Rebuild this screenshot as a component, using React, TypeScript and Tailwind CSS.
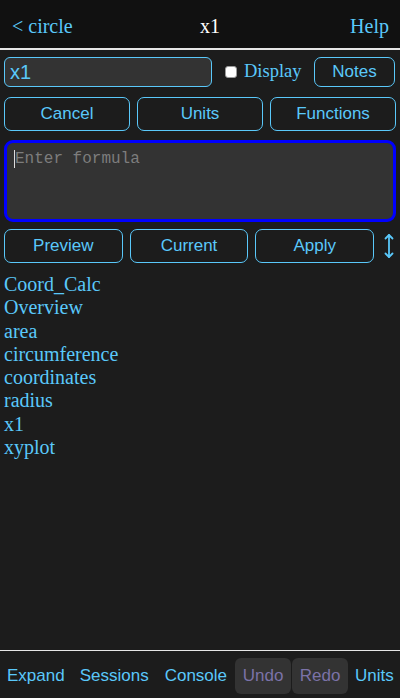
import React from "react";

const sans = { fontFamily: '"Liberation Sans", Arial, sans-serif' };
const serif = { fontFamily: '"Liberation Serif", "Times New Roman", serif' };
const mono = { fontFamily: '"Liberation Mono", "Courier New", monospace' };

function Btn({ label, className = "" }: { label: string; className?: string }) {
  return (
    <button
      className={`border border-[#5ac8fa] rounded-[7px] text-[#5ac8fa] text-[17px] bg-transparent flex items-center justify-center ${className}`}
      style={sans}
    >
      {label}
    </button>
  );
}

export default function App() {
  const items = ["Coord_Calc", "Overview", "area", "circumference", "coordinates", "radius", "x1", "xyplot"];
  return (
    <div className="w-[400px] h-[698px] bg-[#1c1c1c] flex flex-col overflow-hidden">
      <div className="h-[50px] bg-[#111111] border-b-2 border-[#e6e6e6] flex items-center justify-between px-[12px] pt-[3px] shrink-0 relative">
        <span className="text-[20px] text-[#5ac8fa]" style={serif}>&lt; circle</span>
        <span className="text-[20px] text-white absolute left-1/2 -translate-x-1/2 ml-[10px]" style={serif}>x1</span>
        <span className="text-[20px] text-[#5ac8fa] -mr-[1px]" style={serif}>Help</span>
      </div>
      <div className="px-[4px] flex flex-col">
        <div className="flex items-center mt-[7px] h-[30px]">
          <div className="w-[208px] h-[30px] bg-[#333333] border border-[#5ac8fa] rounded-[6px] flex items-center px-[5px]">
            <span className="text-[20px] text-[#5ac8fa]" style={sans}>x1</span>
          </div>
          <span className="ml-[13px] w-[12px] h-[12px] bg-white rounded-[3px] border border-[#9a9a9a]" />
          <span className="ml-[7px] text-[18.5px] text-[#5ac8fa]" style={serif}>Display</span>
          <Btn label="Notes" className="ml-auto w-[81px] h-[30px] mr-[1px]" />
        </div>
        <div className="flex gap-[7px] mt-[10px]">
          <Btn label="Cancel" className="flex-1 h-[34px]" />
          <Btn label="Units" className="flex-1 h-[34px]" />
          <Btn label="Functions" className="flex-1 h-[34px]" />
        </div>
        <div className="mt-[9px] h-[82px] bg-[#333333] border-[3px] border-[#0000ff] rounded-[9px] px-[7px] pt-[2px]">
          <span className="text-[16px] text-[#7d7d7d] border-l border-[#dddddd]" style={mono}>Enter formula</span>
        </div>
        <div className="flex items-center gap-[7px] mt-[7px]">
          <Btn label="Preview" className="flex-1 h-[34px]" />
          <Btn label="Current" className="flex-1 h-[34px]" />
          <Btn label="Apply" className="flex-1 h-[34px]" />
          <div className="w-[15px] flex justify-center">
            <svg width="10" height="28" viewBox="0 0 10 28" fill="none" stroke="#5ac8fa" strokeWidth="1.8" strokeLinecap="round" strokeLinejoin="round">
              <line x1="5" y1="3" x2="5" y2="25" />
              <polyline points="1.5,6.5 5,3 8.5,6.5" />
              <polyline points="1.5,21.5 5,25 8.5,21.5" />
            </svg>
          </div>
        </div>
      </div>
      <div className="flex-1 px-[4px] pt-[10px] flex flex-col">
        {items.map((it) => (
          <span key={it} className="text-[20px] leading-[23.3px] text-[#5ac8fa]" style={serif}>{it}</span>
        ))}
      </div>
      <div className="border-t border-[#e6e6e6] h-[48px] flex items-start justify-between pt-[7px] px-0 shrink-0" style={sans}>
        <span className="h-[36px] px-[7px] flex items-center text-[17px] text-[#5ac8fa]">Expand</span>
        <span className="h-[36px] px-[8px] flex items-center text-[17px] text-[#5ac8fa]">Sessions</span>
        <span className="h-[36px] px-[8px] flex items-center text-[17px] text-[#5ac8fa]">Console</span>
        <div className="flex gap-[1px]">
          <span className="h-[36px] w-[56px] rounded-[6px] bg-[#333333] flex items-center justify-center text-[17px] text-[#7b72a8]">Undo</span>
          <span className="h-[36px] w-[56px] rounded-[6px] bg-[#333333] flex items-center justify-center text-[17px] text-[#7b72a8]">Redo</span>
        </div>
        <span className="h-[36px] px-[7px] flex items-center text-[17px] text-[#5ac8fa]">Units</span>
      </div>
    </div>
  );
}
